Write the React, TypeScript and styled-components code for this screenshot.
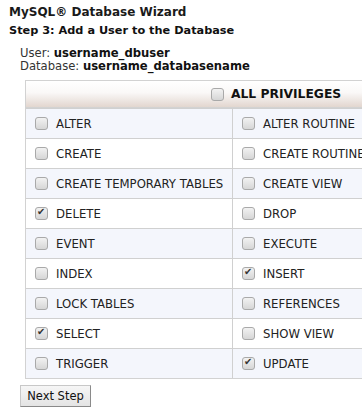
import React from "react";
import styled, { createGlobalStyle } from "styled-components";

const GlobalStyle = createGlobalStyle`
  html, body {
    margin: 0;
    padding: 0;
    background: #fff;
    overflow: hidden;
  }
  body {
    font-family: "DejaVu Sans", Verdana, sans-serif;
    color: #222;
  }
`;

const Page = styled.div`
  padding: 4px 0 0 9px;
  width: 353px;
  height: 410px;
  overflow: hidden;
`;

const Title = styled.h1`
  font-size: 12px;
  font-weight: bold;
  margin: 0;
  line-height: 16px;
  color: #1a1a1a;
`;

const StepTitle = styled.h2`
  font-size: 11.3px;
  font-weight: bold;
  margin: 4px 0 0;
  line-height: 14px;
  color: #111;
`;

const Info = styled.div`
  margin: 9px 0 0 11px;
  font-size: 11.6px;
  line-height: 13px;
  color: #333;

  b {
    color: #111;
  }
`;

const Table = styled.div`
  margin: 7px 0 0 16px;
  width: 412px;
  border: 1px solid #d2d2d2;
`;

const Header = styled.div`
  height: 26px;
  display: flex;
  align-items: center;
  padding-left: 185px;
  gap: 7px;
  background: linear-gradient(to bottom, #ffffff 0%, #faf8f7 45%, #e2d6cf 100%);
  border-bottom: 1px solid #d2d2d2;
  font-size: 12.3px;
  font-weight: bold;
  color: #111;
`;

const Row = styled.div<{ $alt: boolean }>`
  display: grid;
  grid-template-columns: 206px 1fr;
  height: 29px;
  background: ${(p) => (p.$alt ? "#f4f6fc" : "#ffffff")};
  border-top: 1px solid #d0d0d0;

  &:first-of-type {
    border-top: none;
  }
`;

const Cell = styled.label`
  display: flex;
  align-items: center;
  gap: 8px;
  padding-left: 9px;
  font-size: 11.7px;
  color: #222;
  white-space: nowrap;

  & + & {
    border-left: 1px solid #d0d0d0;
  }
`;

const Box = styled.span<{ $on?: boolean }>`
  position: relative;
  width: 11px;
  height: 11px;
  border: 1px solid #a9a9a9;
  border-radius: 3px;
  background: linear-gradient(to bottom, #f2f2f2, #d6d6d6);
  flex: none;

  &::after {
    content: ${(p) => (p.$on ? '"✔"' : '""')};
    position: absolute;
    left: 1px;
    top: -2px;
    font-size: 10px;
    color: #333;
  }
`;

const Button = styled.button`
  display: block;
  margin: 6px 0 0 11px;
  width: 71px;
  height: 22px;
  padding: 0;
  font-family: "DejaVu Sans", Verdana, sans-serif;
  font-size: 11.5px;
  color: #111;
  background: linear-gradient(to bottom, #f6f6f6, #e4e4e4);
  border: 1px solid #c8c8c8;
  border-right-color: #8a8a8a;
  border-bottom-color: #8a8a8a;
  border-radius: 0;
`;

const rows: [string, boolean, string, boolean][] = [
  ["ALTER", false, "ALTER ROUTINE", false],
  ["CREATE", false, "CREATE ROUTINE", false],
  ["CREATE TEMPORARY TABLES", false, "CREATE VIEW", false],
  ["DELETE", true, "DROP", false],
  ["EVENT", false, "EXECUTE", false],
  ["INDEX", false, "INSERT", true],
  ["LOCK TABLES", false, "REFERENCES", false],
  ["SELECT", true, "SHOW VIEW", false],
  ["TRIGGER", false, "UPDATE", true],
];

export default function App() {
  return (
    <Page>
      <GlobalStyle />
      <Title>MySQL® Database Wizard</Title>
      <StepTitle>Step 3: Add a User to the Database</StepTitle>
      <Info>
        User: <b>username_dbuser</b>
        <br />
        Database: <b>username_databasename</b>
      </Info>
      <Table>
        <Header>
          <Box />
          ALL PRIVILEGES
        </Header>
        {rows.map(([a, aOn, b, bOn], i) => (
          <Row key={a} $alt={i % 2 === 0}>
            <Cell>
              <Box $on={aOn} />
              {a}
            </Cell>
            <Cell>
              <Box $on={bOn} />
              {b}
            </Cell>
          </Row>
        ))}
      </Table>
      <Button>Next Step</Button>
    </Page>
  );
}
